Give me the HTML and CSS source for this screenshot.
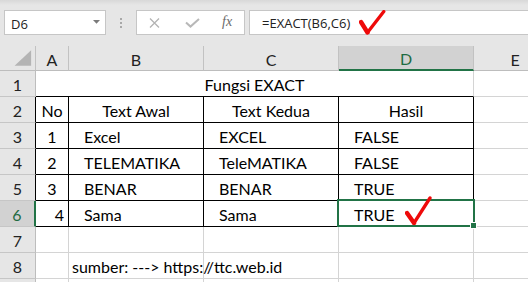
FILE: index.html
```html
<!DOCTYPE html>
<html>
<head>
<meta charset="utf-8">
<link rel="stylesheet" href="styles.css">
</head>
<body>
<div class="topbar">
  <div class="namebox"><span>D6</span><svg class="caret" width="7" height="4" viewBox="0 0 7 4"><path d="M0 0 L7 0 L3.5 3.8 Z" fill="#7a7a7a"/></svg></div>
  <div class="grip"><i></i><i></i><i></i></div>
  <div class="fxbtns">
    <svg class="ic-x" width="11" height="10" viewBox="0 0 11 10"><path d="M1 0.5 L10 9.5 M10 0.5 L1 9.5" stroke="#b3b3b3" stroke-width="1.3" fill="none"/></svg>
    <svg class="ic-ok" width="15" height="10" viewBox="0 0 15 10"><path d="M1 4.5 L5.5 8.6 L14 1" fill="none" stroke="#b8b8b8" stroke-width="2"/></svg>
    <span class="fx">fx</span>
  </div>
  <div class="formula"><span>=EXACT(B6,C6)</span>
    <svg class="redcheck rc1" width="27" height="25" viewBox="0 0 27 25"><path d="M2 12 L8.5 22.5" stroke="#ee0a0a" stroke-width="4.4" stroke-linecap="round" fill="none"/><path d="M8.5 22.5 L24.8 1.6" stroke="#ee0a0a" stroke-width="3.3" stroke-linecap="round" fill="none"/></svg>
  </div>
</div>
<div class="sheet">
  <div class="hc corner"><svg width="36" height="25" viewBox="0 0 36 25"><polygon points="15,20 32,20 32,4" fill="#b4b4b4"/></svg></div>
  <div class="hc">A</div>
  <div class="hc">B</div>
  <div class="hc">C</div>
  <div class="hc hsel">D</div>
  <div class="hc he">E</div>

  <div class="rh">1</div>
  <div class="c merge tbot ctr">Fungsi EXACT</div>
  <div class="c ce"></div>

  <div class="rh tb">2</div>
  <div class="c t ctr">No</div>
  <div class="c t ctr">Text Awal</div>
  <div class="c t ctr">Text Kedua</div>
  <div class="c t ctr">Hasil</div>
  <div class="c ce"></div>

  <div class="rh tb">3</div>
  <div class="c t ctr">1</div>
  <div class="c t ind">Excel</div>
  <div class="c t ind">EXCEL</div>
  <div class="c t ind">FALSE</div>
  <div class="c ce"></div>

  <div class="rh tb">4</div>
  <div class="c t ctr">2</div>
  <div class="c t ind">TELEMATIKA</div>
  <div class="c t ind">TeleMATIKA</div>
  <div class="c t ind">FALSE</div>
  <div class="c ce"></div>

  <div class="rh tb">5</div>
  <div class="c t ctr">3</div>
  <div class="c t ind">BENAR</div>
  <div class="c t ind">BENAR</div>
  <div class="c t ind">TRUE</div>
  <div class="c ce"></div>

  <div class="rh rsel">6</div>
  <div class="c t rt">4</div>
  <div class="c t ind">Sama</div>
  <div class="c t ind">Sama</div>
  <div class="c t ind active">TRUE
    <span class="selbox"></span>
    <span class="handle"></span>
    <svg class="redcheck rc2" width="27" height="29" viewBox="0 0 27 29"><path d="M2 17 L9 27" stroke="#ee0a0a" stroke-width="4.4" stroke-linecap="round" fill="none"/><path d="M9 27 L25 2" stroke="#ee0a0a" stroke-width="3.3" stroke-linecap="round" fill="none"/></svg>
  </div>
  <div class="c ce"></div>

  <div class="rh">7</div>
  <div class="c"></div><div class="c"></div><div class="c"></div><div class="c"></div><div class="c ce"></div>

  <div class="rh">8</div>
  <div class="c"></div>
  <div class="c note">sumber: ---&gt; https://ttc.web.id</div>
  <div class="c"></div><div class="c"></div><div class="c ce"></div>

  <div class="rh last"></div>
  <div class="c last"></div><div class="c last"></div><div class="c last"></div><div class="c last"></div><div class="c ce last"></div>
</div>
</body>
</html>
```
FILE: styles.css
```css
* { box-sizing: border-box; }
html, body { margin: 0; padding: 0; }
body {
  width: 528px;
  height: 282px;
  overflow: hidden;
  background: #fff;
  font-family: Lato, "Liberation Sans", sans-serif;
}
.topbar {
  height: 46px;
  background: linear-gradient(#d8d8d8 0, #e6e6e6 5px);
  display: flex;
  align-items: flex-start;
  padding: 10px 0 0 4px;
  width: 528px;
}
.namebox {
  width: 102px;
  height: 25px;
  border: 1px solid #c6c6c6;
  background: #fff;
  display: flex;
  align-items: center;
  justify-content: space-between;
  padding: 2px 5px 0 6px;
  font: 13px "Open Sans", sans-serif;
  color: #222;
}
.caret { margin-top: -3px; }
.grip {
  margin-left: 14px;
  width: 3px;
  height: 25px;
  display: flex;
  flex-direction: column;
  justify-content: center;
  gap: 2px;
}
.grip i { display: block; width: 2px; height: 2px; background: #a8a8a8; }
.fxbtns {
  margin-left: 13px;
  width: 109px;
  height: 25px;
  border: 1px solid #c6c6c6;
  background: #fff;
  display: flex;
  align-items: center;
  padding-left: 12px;
}
.ic-ok { margin-left: 25px; }
.fx {
  margin-left: 22px;
  font: italic 14px "Liberation Serif", serif;
  color: #6a6a6a;
  padding-bottom: 2px;
}
.formula {
  margin-left: 4px;
  flex: 1;
  height: 25px;
  border: 1px solid #c6c6c6;
  border-right: none;
  background: #fff;
  position: relative;
  display: flex;
  align-items: center;
  padding: 1px 0 0 12px;
  font: 13px "Open Sans", sans-serif;
  color: #222;
}
.redcheck { position: absolute; }
.rc1 { left: 109px; top: -1px; }
.rc2 { left: 66px; top: -5px; z-index: 3; }

.sheet {
  display: grid;
  grid-template-columns: 36px 33px 135px 135px 135px 54px;
  grid-template-rows: 25px repeat(8, 26px) 3px;
  width: 528px;
  font-size: 16px;
  color: #000;
}
.hc {
  background: #e6e6e6;
  border-right: 1px solid #c2c2c2;
  border-bottom: 1px solid #bdbdbd;
  display: flex;
  align-items: center;
  justify-content: center;
  padding-top: 2px;
  color: #222;
}
.corner { padding: 0; align-items: stretch; }
.hsel {
  background: #d2d2d2;
  border-bottom: 2px solid #217346;
  color: #1e6b42;
}
.he { border-right: none; padding-left: 28px; }
.rh {
  background: #e6e6e6;
  border-right: 1px solid #bdbdbd;
  border-bottom: 1px solid #c6c6c6;
  display: flex;
  align-items: center;
  justify-content: center;
  padding-top: 2px;
  color: #222;
}
.rh.tb { border-right-color: #000; }
.rsel {
  background: #d2d2d2;
  border-right: 2px solid #217346;
  color: #1e6b42;
}
.c {
  border-right: 1px solid #d4d4d4;
  border-bottom: 1px solid #d4d4d4;
  display: flex;
  align-items: center;
  padding-top: 2px;
  white-space: nowrap;
}
.ce { border-right: none; }
.last { border-bottom: none; padding: 0; }
.merge { grid-column: span 4; }
.tbot { border-bottom-color: #000; }
.t { border-right-color: #000; border-bottom-color: #000; }
.ctr { justify-content: center; }
.ind { padding-left: 15px; }
.rt { justify-content: flex-end; padding-right: 4px; }
.note { padding-left: 3px; overflow: visible; position: relative; z-index: 1; }
.active { position: relative; }
.selbox {
  position: absolute;
  left: -2px;
  top: -2px;
  width: 138px;
  height: 28px;
  border: 2px solid #217346;
}
.handle {
  position: absolute;
  left: 131px;
  top: 21px;
  width: 7px;
  height: 7px;
  background: #217346;
  border: 1px solid #fff;
  z-index: 2;
}
```
